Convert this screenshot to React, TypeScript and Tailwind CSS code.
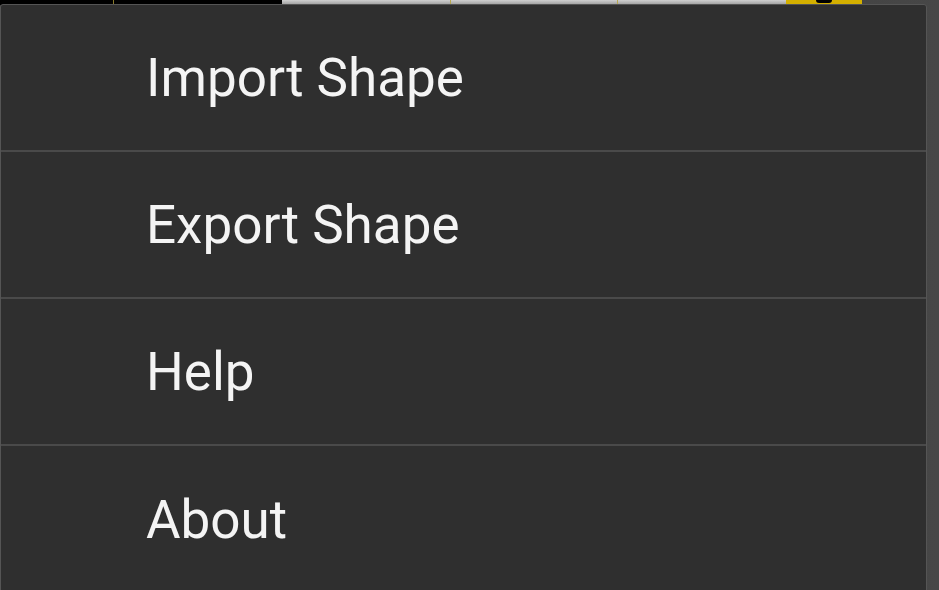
export default function App() {
  const items = ["Import Shape", "Export Shape", "Help", "About"];
  return (
    <div className="relative w-[939px] h-[590px] overflow-hidden bg-gradient-to-r from-[#343434] via-[#3a3a3a] to-[#474747]">
      {/* strip of the screen behind the menu */}
      <div className="flex h-[5px]">
        <div className="w-[282px] bg-black flex">
          <div className="ml-[113px] w-px bg-[#8a7a2a]" />
        </div>
        <div className="w-[504px] bg-gradient-to-b from-[#d0d0d0] to-[#9a9a9a] flex">
          <div className="ml-[168px] w-px bg-[#b8a850]" />
          <div className="ml-[166px] w-px bg-[#b8a850]" />
        </div>
        <div className="w-[76px] bg-[#d4b000] flex justify-center">
          <div className="w-[16px] h-[3px] bg-black rounded-b-sm" />
        </div>
      </div>

      {/* overflow menu */}
      <div className="absolute left-0 top-[4px] w-[927px] h-[600px] bg-[#2f2f2f] border border-[#555555] rounded-tr-[3px] rounded-tl-[3px] flex flex-col">
        {items.map((label, i) => (
          <div
            key={label}
            className={
              "h-[147px] shrink-0 flex items-center pl-[145px] pt-[3px] text-[53px] text-[#f4f4f4] font-['Roboto',sans-serif] " +
              (i < items.length - 1 ? "border-b-2 border-[#4a4a4a]" : "")
            }
          >
            {label}
          </div>
        ))}
      </div>
    </div>
  );
}
